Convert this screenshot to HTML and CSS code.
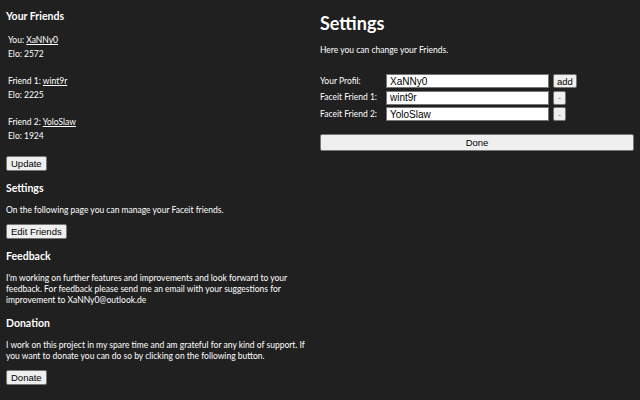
FILE: index.html
```html
<!DOCTYPE html>
<html lang="en">
<head>
    <meta charset="UTF-8">
    <title>Faceit Friends</title>
    <link rel="stylesheet" href="styles.css">
</head>
<body>
    <div class="popup">
        <div class="column left">
            <h3 class="first">Your Friends</h3>
            <div class="friend">
                <div>You: <a href="#">XaNNy0</a></div>
                <div>Elo: 2572</div>
            </div>
            <div class="friend">
                <div>Friend 1: <a href="#">wint9r</a></div>
                <div>Elo: 2225</div>
            </div>
            <div class="friend">
                <div>Friend 2: <a href="#">YoloSlaw</a></div>
                <div>Elo: 1924</div>
            </div>
            <button class="btn">Update</button>

            <h3>Settings</h3>
            <p>On the following page you can manage your Faceit friends.</p>
            <button class="btn">Edit Friends</button>

            <h3>Feedback</h3>
            <p>I'm working on further features and improvements and look forward to your feedback. For feedback please send me an email with your suggestions for improvement to XaNNy0@outlook.de</p>

            <h3>Donation</h3>
            <p>I work on this project in my spare time and am grateful for any kind of support. If you want to donate you can do so by clicking on the following button.</p>
            <button class="btn">Donate</button>
        </div>

        <div class="column">
            <h1>Settings</h1>
            <p class="intro">Here you can change your Friends.</p>
            <table class="friends-form">
                <tr>
                    <td class="label">Your Profil:</td>
                    <td><input type="text" value="XaNNy0"></td>
                    <td><button class="btn small">add</button></td>
                </tr>
                <tr>
                    <td class="label">Faceit Friend 1:</td>
                    <td><input type="text" value="wint9r"></td>
                    <td><button class="btn small tiny">-</button></td>
                </tr>
                <tr>
                    <td class="label">Faceit Friend 2:</td>
                    <td><input type="text" value="YoloSlaw"></td>
                    <td><button class="btn small tiny">-</button></td>
                </tr>
            </table>
            <button class="btn done">Done</button>
        </div>
    </div>
</body>
</html>
```

FILE: styles.css
```css
/* Base */
* {
    box-sizing: border-box;
}

body {
    margin: 0;
    background: #202020;
    color: #ffffff;
    font-family: Lato, "Open Sans", sans-serif;
    font-size: 8.5px;
    line-height: 11px;
}

.popup {
    display: grid;
    grid-template-columns: 314px 314px;
    padding: 0 6px;
}

.column.left {
    padding-right: 8px;
}

/* Left column */
h3 {
    margin: 11px 0;
    font-size: 10.5px;
    font-weight: 700;
    line-height: 12px;
}

h3.first {
    margin-top: 10px;
}

.friend {
    padding-left: 2px;
    margin-bottom: 13px;
    line-height: 14px;
}

.friend a,
.friend a:visited {
    color: #ffffff;
}

p {
    margin: 0 0 8px;
}

/* Buttons */
.btn {
    display: block;
    height: 15px;
    padding: 0 4px;
    margin-bottom: 11px;
    font-family: "Liberation Sans", Arial, sans-serif;
    font-size: 9.5px;
    color: #000000;
    background: #efefef;
    border: 1px solid #767676;
    border-radius: 2px;
}

/* Right column */
h1 {
    margin: 12px 0 11px;
    font-size: 18px;
    font-weight: 700;
    line-height: 22px;
}

.intro {
    margin: 0 0 17px;
}

.friends-form {
    border-collapse: collapse;
    margin-bottom: 11px;
}

.friends-form tr {
    height: 16.5px;
}

.friends-form td {
    padding: 0;
    vertical-align: middle;
}

.friends-form .label {
    width: 66px;
    white-space: nowrap;
}

.friends-form input {
    display: block;
    width: 163px;
    height: 14px;
    padding: 0 3px;
    font-family: "Liberation Sans", Arial, sans-serif;
    font-size: 10px;
    color: #000000;
    border: 1px solid #767676;
    background: #ffffff;
}

.btn.small {
    margin: 0 0 0 4px;
    height: 14px;
    padding: 0 3px;
}

.btn.tiny {
    width: 13px;
    padding: 0;
    color: #666666;
    font-size: 8px;
}

.btn.done {
    width: 100%;
    height: 17px;
    margin: 0;
}
```
